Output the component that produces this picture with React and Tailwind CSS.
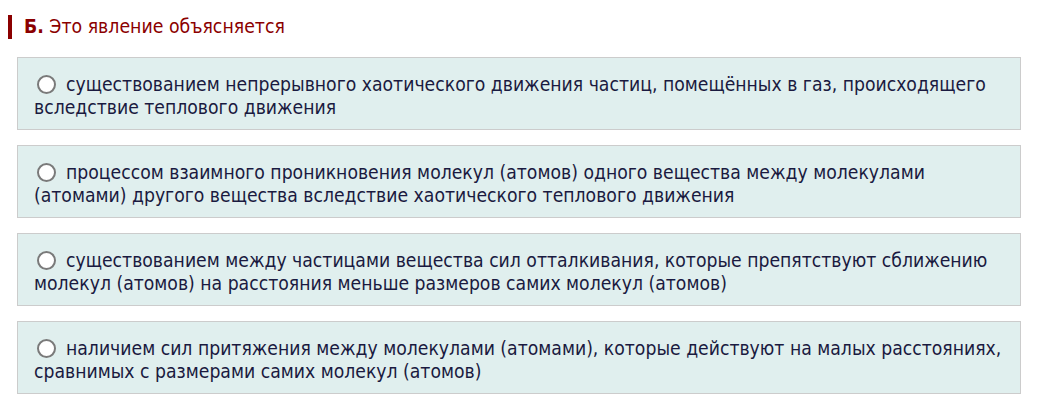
import React from 'react';

const options = [
  'существованием непрерывного хаотического движения частиц, помещённых в газ, происходящего вследствие теплового движения',
  'процессом взаимного проникновения молекул (атомов) одного вещества между молекулами (атомами) другого вещества вследствие хаотического теплового движения',
  'существованием между частицами вещества сил отталкивания, которые препятствуют сближению молекул (атомов) на расстояния меньше размеров самих молекул (атомов)',
  'наличием сил притяжения между молекулами (атомами), которые действуют на малых расстояниях, сравнимых с размерами самих молекул (атомов)',
];

const App = () => {
  return (
    <div className="w-[1050px] h-[420px] bg-white pt-[15px] pl-[8px] pr-[29px]" style={{ fontFamily: '"DejaVu Sans Condensed", "DejaVu Sans", Verdana, sans-serif' }}>
      {/* Question header */}
      <div className="border-l-4 border-[#8b0000] pl-3 text-[19.3px] leading-[24px] text-[#8b0000]">
        <span className="font-bold">Б.</span> Это явление объясняется
      </div>

      {/* Answer options */}
      <div className="mt-[18px] ml-[9px] flex flex-col gap-[15px]">
        {options.map((text, i) => (
          <label
            key={i}
            className="block h-[73px] bg-[#e0efee] border border-[#cccccc] pl-4 pr-4 pt-[15px] text-[19.2px] leading-[23px] text-[#1a1a40]"
          >
            <span className="inline-block w-[19px] h-[19px] rounded-full border-2 border-[#7a7a7a] bg-white align-[-3px] ml-[3px] mr-[10px]" />
            {text}
          </label>
        ))}
      </div>
    </div>
  );
};

export default App;
